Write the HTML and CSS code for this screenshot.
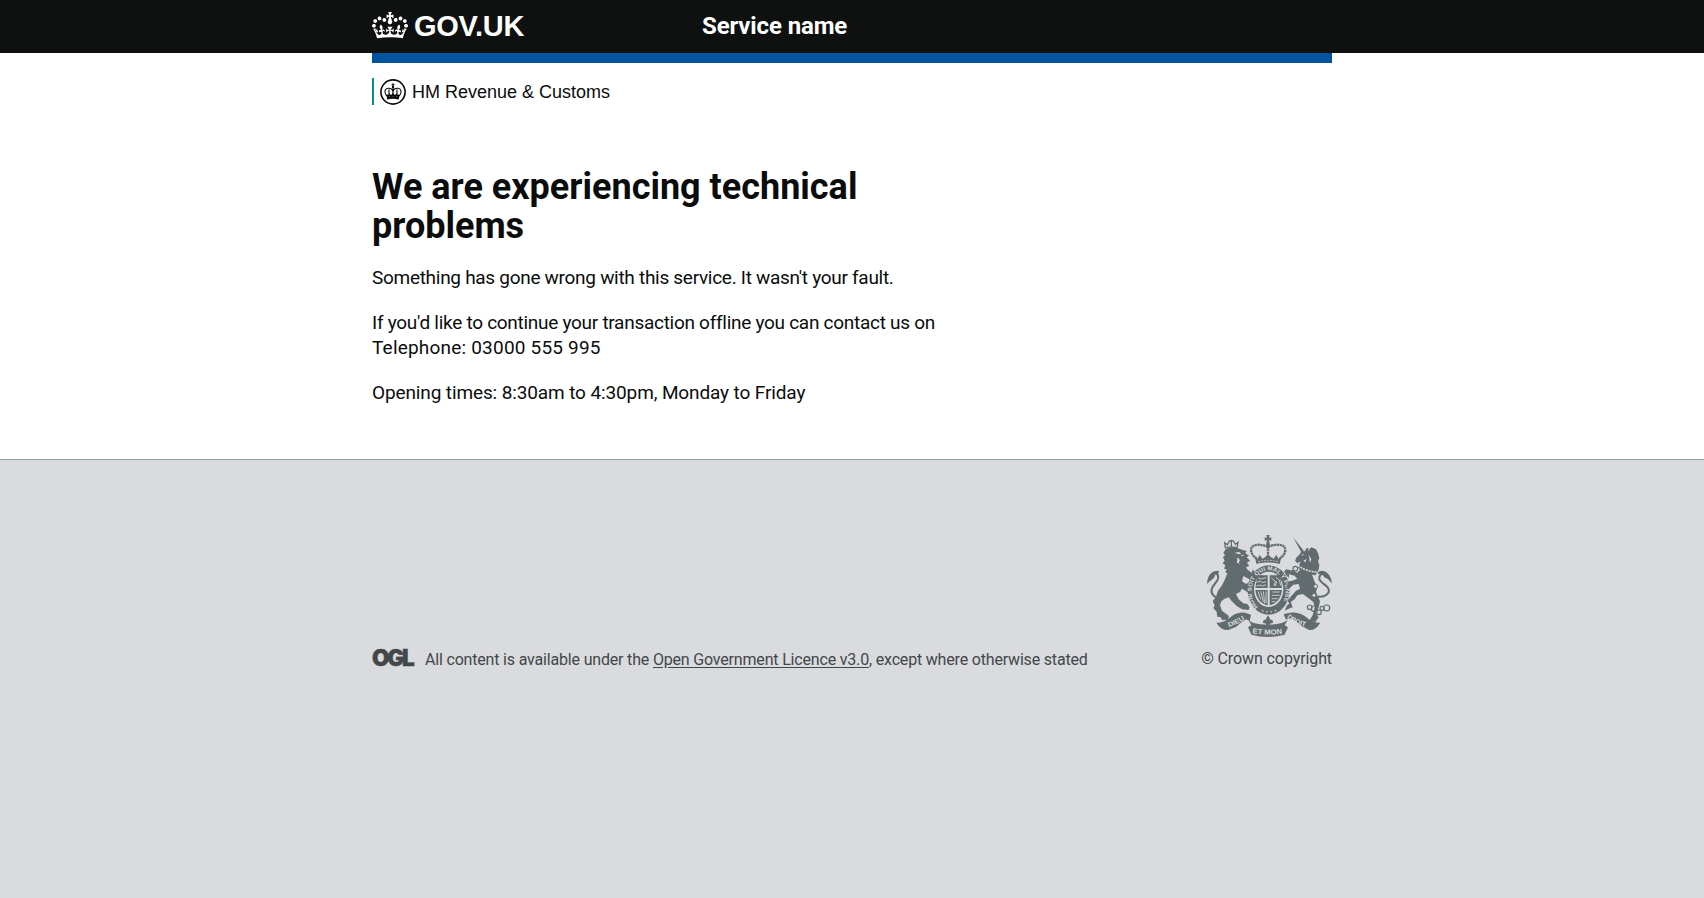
FILE: index.html
```html
<!DOCTYPE html>
<html lang="en">
<head>
<meta charset="utf-8">
<title>We are experiencing technical problems</title>
<link rel="stylesheet" href="styles.css">
</head>
<body>
<header class="header">
  <div class="container header-inner">
    <a class="logo">
      <svg class="crown" viewBox="0 0 132 97"><path fill="currentColor" d="M25 30.2c3.5 1.5 7.7-.2 9.1-3.7 1.5-3.6-.2-7.8-3.9-9.2-3.6-1.4-7.6.3-9.1 3.9-1.4 3.5.3 7.5 3.9 9zM9 39.5c3.6 1.5 7.8-.2 9.2-3.7 1.5-3.6-.2-7.8-3.9-9.1-3.6-1.5-7.6.2-9.1 3.8-1.4 3.5.3 7.5 3.8 9zM4.4 57.2c3.5 1.5 7.7-.2 9.1-3.8 1.5-3.6-.2-7.7-3.9-9.1-3.5-1.5-7.6.3-9.1 3.8-1.4 3.5.3 7.6 3.9 9.1zm38.3-21.4c3.5 1.5 7.7-.2 9.1-3.8 1.5-3.6-.2-7.7-3.9-9.1-3.6-1.5-7.6.3-9.1 3.8-1.3 3.6.4 7.7 3.9 9.1zm64.4-5.6c-3.6 1.5-7.8-.2-9.1-3.7-1.5-3.6.2-7.8 3.8-9.2 3.6-1.4 7.7.3 9.2 3.9 1.3 3.5-.4 7.5-3.9 9zm15.9 9.3c-3.6 1.5-7.7-.2-9.1-3.7-1.5-3.6.2-7.8 3.7-9.1 3.6-1.5 7.7.2 9.2 3.8 1.5 3.5-.3 7.5-3.8 9zm4.7 17.7c-3.6 1.5-7.8-.2-9.2-3.8-1.5-3.6.2-7.7 3.9-9.1 3.6-1.5 7.7.3 9.2 3.8 1.3 3.5-.4 7.6-3.9 9.1zM89.3 35.8c-3.6 1.5-7.8-.2-9.2-3.8-1.4-3.6.2-7.7 3.9-9.1 3.6-1.5 7.7.3 9.2 3.8 1.4 3.6-.3 7.7-3.9 9.1zM69.7 17.7l8.9 4.7V9.3l-8.9 2.8c-.2-.3-.5-.6-.9-.9L72.4 0H59.6l3.5 11.2c-.3.3-.6.5-.9.9l-8.8-2.8v13.1l8.8-4.7c.3.3.6.7.9.9l-5 15.4v.1c-.2.8-.4 1.6-.4 2.4 0 4.1 3.1 7.5 7 8.1h.2c.3 0 .7.1 1 .1.4 0 .7 0 1-.1h.2c4-.6 7.1-4.1 7.1-8.1 0-.8-.1-1.7-.4-2.4V34l-5.1-15.4c.4-.2.7-.6 1-.9zM66 92.8c16.9 0 32.8 1.1 47.1 3.2 4-16.9 8.9-26.7 14-33.5l-9.6-3.4c1 4.9 1.1 7.2 0 10.2-1.5-1.4-3-4.3-4.2-8.7L108.6 76c2.8-2 5-3.2 7.5-3.3-4.4 9.4-10 11.9-13.6 11.2-4.3-.8-6.3-4.6-5.6-7.9 1-4.7 5.7-5.9 8-.5 4.3-8.7-3-11.4-7.6-8.8 7.1-7.2 7.9-13.5 2.1-21.1-8 6.1-8.1 12.3-4.5 20.8-4.7-5.4-12.1-2.5-9.5 6.2 3.4-5.2 7.9-2 7.2 3.1-.6 4.3-6.4 7.8-13.5 7.2-10.3-.9-10.9-8-11.2-13.8 2.5-.5 7.1 1.8 11 7.3L80.2 60c-4.1 4.4-8 5.3-12.3 5.4 1.4-4.4 8-11.6 8-11.6H55.5s6.4 7.2 7.9 11.6c-4.2-.1-8-1-12.3-5.4l1.4 16.4c3.9-5.5 8.5-7.7 10.9-7.3-.3 5.8-.9 12.8-11.1 13.8-7.2.6-12.9-2.9-13.5-7.2-.7-5 3.8-8.3 7.1-3.1 2.7-8.7-4.6-11.6-9.4-6.2 3.7-8.5 3.6-14.7-4.6-20.8-5.8 7.6-5 13.9 2.2 21.1-4.7-2.6-11.9.1-7.7 8.8 2.3-5.5 7.1-4.2 8.1.5.7 3.3-1.3 7.1-5.7 7.9-3.5.7-9-1.8-13.5-11.2 2.5.1 4.7 1.3 7.5 3.3l-4.7-15.4c-1.2 4.4-2.7 7.2-4.3 8.7-1.1-3-.9-5.3 0-10.2l-9.5 3.4c5 6.9 9.9 16.7 14 33.5 14.8-2.1 30.8-3.2 47.7-3.2z"/></svg>
      <span class="logo-text">GOV.UK</span>
    </a>
    <a class="service">Service name</a>
  </div>
</header>
<div class="container">
  <div class="bluebar"></div>
  <div class="org">
    <svg class="org-crest" viewBox="0 0 26 26" fill="none" stroke="currentColor">
      <circle cx="13" cy="13" r="12.1" stroke-width="1.600"/>
      <path stroke-width="1.100" d="M13 4.200v4.500M11.500 5.700h3M6.800 17c-1.500-2-2.300-4.200-1.500-6 .9-2 4.400-2.200 6.200-1 1.800 1.200 1.700 4 1.500 6.500M19.200 17c1.500-2 2.300-4.200 1.500-6-.9-2-4.400-2.200-6.200-1-1.800 1.200-1.700 4-1.500 6.500M13 9v8M9 10.500v5M17 10.500v5"/>
      <path stroke-width="2.300" d="M7 19.300c4-.9 8-.9 12 0"/>
      <path stroke-width="1.900" d="M6.500 15.800l1.500 1.700 1.500-1.700 1.700 1.700 1.800-2 1.800 2 1.700-1.700 1.500 1.700 1.500-1.700"/>
      <circle cx="13" cy="8" r="1.200" fill="currentColor" stroke="none"/>
    </svg>
    <span class="org-name">HM Revenue &amp; Customs</span>
  </div>
  <main class="main">
    <h1 class="heading">We are experiencing technical problems</h1>
    <p class="body l1">Something has gone wrong with this service. It wasn't your fault.</p>
    <p class="body"><span class="l2">If you'd like to continue your transaction offline you can contact us on</span><br><span class="l3">Telephone: 03000 555 995</span></p>
    <p class="body l4">Opening times: 8:30am to 4:30pm, Monday to Friday</p>
  </main>
</div>
<footer class="footer">
  <div class="container footer-inner">
    <div class="licence">
      <span class="ogl">OGL</span>
      <span class="licence-text">All content is available under the <a class="link">Open Government Licence v3.0</a>, except where otherwise stated</span>
    </div>
    <div class="copyright">
      <svg class="arms" viewBox="51 42 375 309" fill="#626c6e">
        <!-- lion -->
        <path d="M108 86Q124 79 142 84L158 90L170 93L166 99L177 107L170 112L180 122L171 128L178 138L168 142L173 150L186 158L188 148L196 158L194 172L200 178L192 188L178 178L160 168L156 184L168 192L178 186L190 204L186 216L192 222L182 230L172 216L156 206L150 216L138 222L146 238L160 250L172 252L179 262L176 270L156 268L140 258L124 242L116 232L104 236L94 244L90 256L96 272L106 280L117 288L114 299L96 300L92 292L82 290L80 276L70 264L74 256L68 244L78 230L84 212L96 196L104 180L112 160L106 156L110 148L102 146L106 136L98 130L104 122L99 112L105 106L100 98Z"/>
        <path fill="#dadbde" d="M134 98l14-2 6 7-10-1zM152 106l10-2-4 5zM142 112l8 8-4 8 6 3-11-2z"/>
        <path fill="none" stroke="#626c6e" stroke-width="4" d="M106 84l-2-16 8 6 6-11 6-2 6 2 6 10 8-6-3 17M104 84q18-7 37 0M124 62v18"/>
        <path fill="none" stroke="#626c6e" stroke-width="6" d="M92 234c-20 0-30-12-27-26 3-14 16-20 19-32 2-9-2-15-8-18"/>
        <path d="M51 192c2-26 12-40 34-40 4 6-2 12-10 12 0 12-14 16-24 28z"/>
        <!-- crown -->
        <path fill="none" stroke="#626c6e" stroke-width="7" stroke-dasharray="7 1.500" d="M200 116c-14-10-20-22-15-34 8-12 36-8 49-1 13-7 42-11 50 1 5 12-1 24-15 34"/>
        <path d="M229 45h10l-2 9 7-2v10l-7-2 3 16-6 6-6-6 3-16-7 2v-10l7 2z"/>
        <path fill="none" stroke="#626c6e" stroke-width="7" stroke-dasharray="6 2" d="M234 80v34"/>
        <path d="M199 132l-4-22 8 6 6-12 8 12 10-6 7-8 7 8 10 6 8-12 6 12 9-6-5 22c-20-6-50-6-70 0z"/>
        <path fill="none" stroke="#dadbde" stroke-width="2" stroke-dasharray="6 3" d="M204 125q30-8 62 0"/>
        <!-- garter and shield -->
        <ellipse cx="236" cy="210" rx="63" ry="74"/>
        <ellipse cx="236" cy="208" rx="44" ry="53" fill="#dadbde"/>
        <path fill="none" id="garter" d="M204 261a51 62 0 1 1 64 0"/>
        <text class="motto"><textPath href="#garter" textLength="262" lengthAdjust="spacingAndGlyphs">HONI SOIT QUI MAL Y PENSE</textPath></text>
        <path fill="none" stroke="#dadbde" stroke-width="4" stroke-dasharray="4 9" d="M216 272q20 8 42-1"/>
        <path d="M202 166h31v38h-37zM239 166h31l6 38h-37zM196 210h37v46c-20-4-34-20-37-46zM239 210h37c-3 26-17 42-37 46z"/>
        <path fill="none" stroke="#dadbde" stroke-width="2.500" d="M204 174l10 3 14-4M200 187l12-4 4 5 12-3M200 198l10-3 8 3 10-4M247 216h22M245 226h24M245 236h18M245 245h12M244 174l12 10-4 14M258 172l10 8 4 16M260 184l-4 14M204 214l8 24M212 214l8 32M220 214l4 36M228 214v36"/>
        <!-- unicorn -->
        <path d="M309 51l32 41-7 5zM315 122L320 112L330 102L334 92L344 94L350 84L356 84L354 94L364 82L378 88L384 100L388 114L384 124L388 134L386 150L376 166L366 164L374 186L382 200L378 216L384 230L390 244L386 262L378 280L386 292L376 306L358 302L368 286L374 262L370 246L352 232L338 222L322 226L314 238L302 246L308 262L296 266L284 272L290 258L298 250L292 242L304 228L318 212L330 206L326 192L310 194L300 204L288 200L296 190L290 186L306 182L322 176L312 166L298 162L296 174L288 164L282 154L290 148L306 152L322 158L330 150L324 142L332 124L322 130Z"/>
        <path fill="none" stroke="#dadbde" stroke-width="5" d="M324 136c14 12 36 20 60 20" stroke-dasharray="6 3"/>
        <path fill="#dadbde" d="M334 104l7-2-2 5zM356 104l8 14-4 10-2-12zM340 122l10-5-4 10z"/>
        <path fill="none" stroke="#626c6e" stroke-width="6" d="M384 230c22 2 36-10 32-22-4-14-26-18-28-32-1-10 6-15 14-18"/>
        <path d="M382 160c10-16 40-6 44 30-10-10-12-16-22-17-4-9-14-9-22-13z"/>
        <g fill="none" stroke="#626c6e" stroke-width="3.500"><circle cx="359" cy="262" r="7"/><circle cx="372" cy="266" r="8"/><circle cx="387" cy="277" r="7"/><circle cx="396" cy="265" r="6"/><circle cx="410" cy="264" r="9"/><circle cx="316" cy="146" r="7"/><circle cx="309" cy="158" r="6"/></g>
        <g fill="#dadbde" stroke="#626c6e" stroke-width="3"><circle cx="377" cy="199" r="6"/><circle cx="372" cy="226" r="6"/></g>
        <!-- scroll -->
        <path d="M79 308q26 0 44-18 18-14 42-12l18 6-4 20-10-6-14 8-16 14-24 10q-22 2-36-22zM391 308q-26 0-44-18-20-14-46-12l-20 4 6 16 12-2 18 8 18 14 22 12q20 2 34-22zM174 298q10 16 60 16t60-16l-10 18 10 6-10 22q-50 14-100 0l-10-22 10-6z"/>
        <path fill="#dadbde" d="M217 288l-12 12 60 0-14-12z"/>
        <path d="M234 286l7 12-3 7c2-10 12-6 11 2-1 4-4 4-6 2l-4 4 3 10h-16l3-10-4-4c-2 2-5 2-6-2-1-8 9-12 11-2l-3-7z"/>
        <path id="s1" fill="none" d="M116 321q30-8 60-31"/><path id="s2" fill="none" d="M187 340q48 8 98 0"/><path id="s3" fill="none" d="M290 293q28 22 68 29"/>
        <text class="scroll"><textPath href="#s1" textLength="54" lengthAdjust="spacingAndGlyphs">DIEU</textPath></text>
        <text class="scroll big"><textPath href="#s2" textLength="90" lengthAdjust="spacingAndGlyphs">ET MON</textPath></text>
        <text class="scroll"><textPath href="#s3" textLength="62" lengthAdjust="spacingAndGlyphs">DROIT</textPath></text>
      </svg>
      <span class="copy-text">© Crown copyright</span>
    </div>
  </div>
</footer>
</body>
</html>
```
FILE: styles.css
```css
* { box-sizing: border-box; }
html { background: #dadbde; }
body { margin: 0; background: #fff; color: #0b0c0c; font-family: Roboto, "Noto Sans", sans-serif; }
.container { width: 960px; margin: 0 auto; }
.header { background: #0f1110; color: #fff; height: 53px; }
.header-inner { display: flex; }
.logo { display: flex; width: 330px; padding-top: 12px; gap: 6px; }
.crown { width: 36px; height: 26.500px; }
.logo-text { font: bold 29px/28px "Liberation Sans", Arial, sans-serif; letter-spacing: -0.25px; }
.service { font-size: 24px; font-weight: 700; line-height: 30px; padding-top: 11px; letter-spacing: -0.13px; }
.bluebar { height: 10px; background: #00539f; }
.org { display: flex; align-items: center; height: 27px; margin-top: 15px; border-left: 2px solid #009088; padding-left: 6px; gap: 6px; }
.org-crest { width: 26px; height: 26px; }
.org-name { font: 18px/25px "Liberation Sans", Arial, sans-serif; padding-top: 2px; }
.main { width: 610px; padding-top: 63px; height: 354px; }
.heading { width: 520px; margin: 0 0 18px; font-size: 36px; font-weight: 700; line-height: 39.400px; }
.body { margin: 0 0 20px; font-size: 19px; line-height: 25px; white-space: nowrap; }
.l1 { letter-spacing: -0.29px; }
.l2 { letter-spacing: -0.28px; }
.l3 { letter-spacing: 0.2px; }
.l4 { letter-spacing: -0.12px; }
.footer { background: #dadbde; border-top: 1px solid #91a1a8; height: 439px; padding-top: 74px; color: #42474a; font-size: 16px; line-height: 20px; }
.footer-inner { display: flex; justify-content: space-between; align-items: flex-end; }
.licence { display: flex; align-items: flex-end; gap: 12px; white-space: nowrap; margin-bottom: -1px; }
.licence-text { letter-spacing: -0.18px; }
.ogl { width: 41px; font: 900 22.500px/20px Inter, sans-serif; letter-spacing: -2.200px; -webkit-text-stroke: 0.400px; padding-bottom: 2px; }
.link { text-decoration: underline; text-underline-offset: 2px; }
.copyright { display: flex; flex-direction: column; align-items: flex-end; gap: 12px; white-space: nowrap; }
.copy-text { letter-spacing: -0.1px; }
.arms { width: 125px; height: 103px; }
.motto { font: bold 17px "Liberation Sans", sans-serif; fill: #dadbde; }
.scroll { font: bold 20px "Liberation Sans", sans-serif; fill: #dadbde; }
.big { font-size: 22px; }
```
